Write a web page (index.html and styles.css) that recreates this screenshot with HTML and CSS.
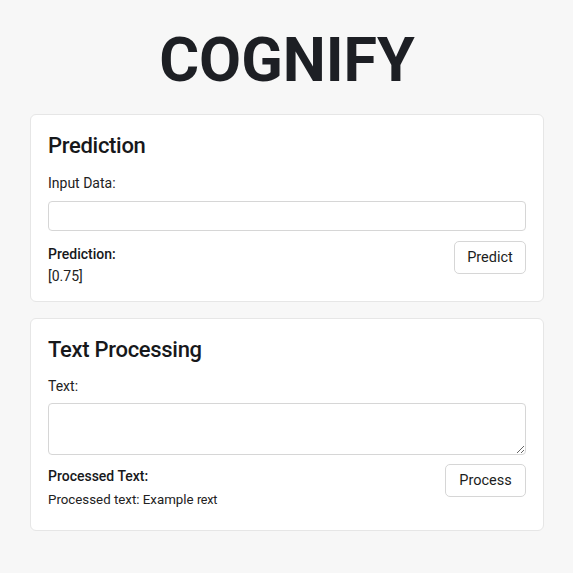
FILE: index.html
```html
<!DOCTYPE html>
<html>
<head>
<meta charset="utf-8">
<link rel="stylesheet" href="styles.css">
</head>
<body>
<main class="page">
  <h1 class="title">COGNIFY</h1>
  <section class="card">
    <h2 class="card-title">Prediction</h2>
    <label class="field-label">Input Data:</label>
    <input class="text-input" type="text">
    <div class="result-row">
      <div class="result">
        <div class="result-label">Prediction:</div>
        <div class="result-value">[0.75]</div>
      </div>
      <button class="btn">Predict</button>
    </div>
  </section>
  <section class="card card-text">
    <h2 class="card-title">Text Processing</h2>
    <label class="field-label">Text:</label>
    <textarea class="text-area"></textarea>
    <div class="result-row">
      <div class="result">
        <div class="result-label">Processed Text:</div>
        <div class="result-value">Processed text: Example <span class="small">rext</span></div>
      </div>
      <button class="btn btn-process">Process</button>
    </div>
  </section>
</main>
</body>
</html>
```
FILE: styles.css
```css
* { box-sizing: border-box; }
html, body { margin: 0; padding: 0; }
body {
  background: #f7f7f7;
  font-family: Roboto, "Liberation Sans", sans-serif;
  color: #1c1d21;
}
.page {
  padding: 28px 29px 0 30px;
  display: flex;
  flex-direction: column;
}
.title {
  margin: 0 0 22px;
  text-align: center;
  font-size: 61px;
  font-weight: 700;
  line-height: 64px;
  color: #1d1f24;
}
.card {
  background: #fff;
  border: 1px solid #e6e6e6;
  border-radius: 6px;
  padding: 18px 17px 16px 17px;
  display: flex;
  flex-direction: column;
  margin-bottom: 16px;
}
.card-title {
  margin: 0 0 15px;
  font-size: 22px;
  font-weight: 500;
  line-height: 26px;
  letter-spacing: -0.3px;
  color: #17181b;
}
.field-label {
  font-size: 14px;
  line-height: 18px;
  color: #222;
  margin-bottom: 9px;
}
.text-input {
  height: 30px;
  border: 1px solid #d6d6d6;
  border-radius: 4px;
  background: #fff;
  margin-bottom: 10px;
}
.text-area {
  height: 52px;
  border: 1px solid #d6d6d6;
  border-radius: 4px;
  background: #fff;
  margin-bottom: 9px;
  resize: vertical;
  font-family: inherit;
}
.result-row {
  display: flex;
  justify-content: space-between;
  align-items: flex-start;
}
.result {
  display: flex;
  flex-direction: column;
  padding-top: 4px;
}
.result-label {
  font-size: 14px;
  font-weight: 500;
  line-height: 18px;
  color: #17181b;
  margin-bottom: 4px;
}
.result-value {
  font-size: 14px;
  line-height: 18px;
  color: #222;
}
.small {
  font-size: 12.5px;
  letter-spacing: -0.2px;
}
.btn {
  font-family: inherit;
  font-size: 14.5px;
  color: #1c1d21;
  background: #fff;
  border: 1px solid #d6d6d6;
  border-radius: 5px;
  height: 33px;
  width: 72px;
  padding: 0;
}
.btn-process {
  width: 81px;
}

/* Text processing card spacing */
.card-text {
  padding-bottom: 21px;
}
.card-text .card-title {
  margin-bottom: 14px;
}
.card-text .field-label {
  margin-bottom: 8px;
}
.card-text .result {
  padding-top: 3px;
}
.card-text .result-label {
  margin-bottom: 6px;
}
.card-text .result-value {
  font-size: 13.3px;
}
```
